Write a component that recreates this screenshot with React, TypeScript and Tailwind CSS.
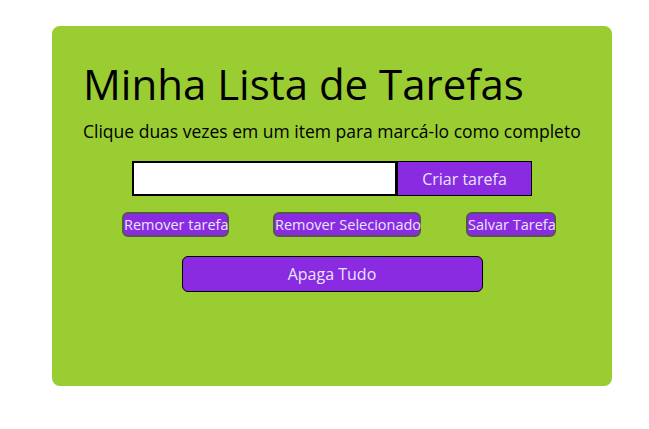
export default function App() {
  return (
    <div className="min-h-[429px] bg-white pt-[26px] pl-[52px]" style={{ fontFamily: '"Open Sans", "Noto Sans", sans-serif' }}>
      <div className="flex h-[360px] w-[560px] flex-col rounded-lg bg-[#9acd32] px-[31px] pt-[33px]">
        <h1 className="text-[42px] leading-[50px] text-black">Minha Lista de Tarefas</h1>
        <p className="mt-[10px] text-[17.5px] leading-[24px] text-black">Clique duas vezes em um item para marcá-lo como completo</p>

        <div className="mt-[18px] flex justify-center">
          <input className="h-[35px] w-[265px] border-2 border-black bg-white px-2 outline-none" />
          <button className="h-[35px] w-[135px] border border-black bg-[#8a2be2] text-[16px] text-[#e6e6fa]">Criar tarefa</button>
        </div>

        <div className="mt-[16px] ml-[39px] flex gap-[44px]">
          <button className="h-[25px] w-[107px] whitespace-nowrap rounded-md border-2 border-[#555] bg-[#8a2be2] px-0 text-[14.5px] text-[#e6e6fa]">Remover tarefa</button>
          <button className="h-[25px] w-[148px] whitespace-nowrap rounded-md border-2 border-[#555] bg-[#8a2be2] px-0 text-[14.5px] text-[#e6e6fa]">Remover Selecionado</button>
          <button className="ml-[1px] h-[25px] w-[90px] whitespace-nowrap rounded-md border-2 border-[#555] bg-[#8a2be2] px-0 text-[14.5px] text-[#e6e6fa]">Salvar Tarefa</button>
        </div>

        <div className="mt-[19px] flex justify-center">
          <button className="h-[36px] w-[301px] rounded-md border border-black bg-[#8a2be2] text-[16px] text-[#e6e6fa]">Apaga Tudo</button>
        </div>
      </div>
    </div>
  );
}
